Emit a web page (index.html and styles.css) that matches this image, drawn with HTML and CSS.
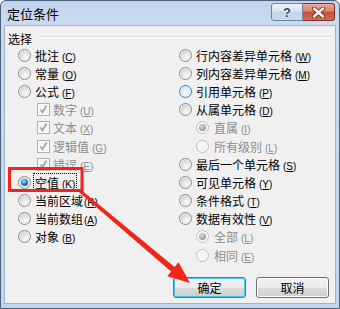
FILE: index.html
```html
<!DOCTYPE html>
<html lang="zh-CN">
<head>
    <meta charset="UTF-8">
    <title>定位条件</title>
    <link rel="stylesheet" href="styles.css">
</head>
<body>
<div class="window">
    <div class="titlebar">
        <span class="title">定位条件</span>
        <span class="cap-btn help">?</span>
        <span class="cap-btn close">
            <svg width="13" height="11" viewBox="0 0 13 11">
                <path d="M2 1.5 L11 9.5 M11 1.5 L2 9.5" stroke="#6a2418" stroke-width="4.2" stroke-linecap="round"/>
                <path d="M2 1.5 L11 9.5 M11 1.5 L2 9.5" stroke="#fff" stroke-width="2.4" stroke-linecap="round"/>
            </svg>
        </span>
    </div>
    <div class="client">
        <div class="group-head"><span>选择</span><i class="rule"></i></div>
        <div class="options">
            <div class="col">
                <div class="row"><span class="radio"></span><span class="label">批注<span class="key">(<u>C</u>)</span></span></div>
                <div class="row"><span class="radio"></span><span class="label">常量<span class="key">(<u>O</u>)</span></span></div>
                <div class="row"><span class="radio"></span><span class="label">公式<span class="key">(<u>F</u>)</span></span></div>
                <div class="row sub-check disabled"><span class="check"></span><span class="label">数字<span class="key">(<u>U</u>)</span></span></div>
                <div class="row sub-check disabled"><span class="check"></span><span class="label">文本<span class="key">(<u>X</u>)</span></span></div>
                <div class="row sub-check disabled"><span class="check"></span><span class="label">逻辑值<span class="key">(<u>G</u>)</span></span></div>
                <div class="row sub-check disabled"><span class="check"></span><span class="label">错误<span class="key">(<u>E</u>)</span></span></div>
                <div class="row"><span class="radio checked"></span><span class="label focus">空值<span class="key">(<u>K</u>)</span></span></div>
                <div class="row"><span class="radio"></span><span class="label">当前区域<span class="key tight">(<u>R</u>)</span></span></div>
                <div class="row"><span class="radio"></span><span class="label">当前数组<span class="key tight">(<u>A</u>)</span></span></div>
                <div class="row"><span class="radio"></span><span class="label">对象<span class="key">(<u>B</u>)</span></span></div>
            </div>
            <div class="col">
                <div class="row"><span class="radio"></span><span class="label">行内容差异单元格<span class="key">(<u>W</u>)</span></span></div>
                <div class="row"><span class="radio"></span><span class="label">列内容差异单元格<span class="key">(<u>M</u>)</span></span></div>
                <div class="row"><span class="radio hover"></span><span class="label">引用单元格<span class="key">(<u>P</u>)</span></span></div>
                <div class="row"><span class="radio"></span><span class="label">从属单元格<span class="key">(<u>D</u>)</span></span></div>
                <div class="row sub disabled"><span class="radio checked"></span><span class="label">直属<span class="key">(<u>I</u>)</span></span></div>
                <div class="row sub disabled"><span class="radio"></span><span class="label">所有级别<span class="key">(<u>L</u>)</span></span></div>
                <div class="row"><span class="radio"></span><span class="label">最后一个单元格<span class="key">(<u>S</u>)</span></span></div>
                <div class="row"><span class="radio"></span><span class="label">可见单元格<span class="key">(<u>Y</u>)</span></span></div>
                <div class="row"><span class="radio"></span><span class="label">条件格式<span class="key">(<u>T</u>)</span></span></div>
                <div class="row"><span class="radio"></span><span class="label">数据有效性<span class="key">(<u>V</u>)</span></span></div>
                <div class="row sub disabled"><span class="radio checked"></span><span class="label">全部<span class="key">(<u>L</u>)</span></span></div>
                <div class="row sub disabled"><span class="radio"></span><span class="label">相同<span class="key">(<u>E</u>)</span></span></div>
            </div>
        </div>
        <div class="footer">
            <button class="btn default">确定</button>
            <button class="btn">取消</button>
        </div>
    </div>
    <!-- annotation drawn over the dialog -->
    <svg class="annot" width="340" height="309" viewBox="0 0 340 309">
        <rect x="9.5" y="168.5" width="72.5" height="22" fill="none" stroke="#f3231b" stroke-width="3"/>
        <polygon fill="#f0261c" points="80.9,189.8 174.6,267 178.5,262.2 190,283 167.3,276.2 171.1,271.4 79.1,192.2"/>
    </svg>
</div>
</body>
</html>
```

FILE: styles.css
```css
body {
    margin: 0;
    font-family: "Noto Sans CJK SC", sans-serif;
    font-size: 12px;
    color: #000;
}
.window {
    position: relative;
    width: 340px;
    height: 309px;
    box-sizing: border-box;
    border: 1px solid #4d6079;
    border-radius: 6px 6px 0 0;
    background: linear-gradient(#c1d4ec, #ccdbef 24px, #c3d6ed);
    display: flex;
    flex-direction: column;
}
.titlebar {
    height: 24px;
    display: flex;
    align-items: flex-start;
    padding: 0 4px 0 6px;
}
.title {
    font-size: 13px;
    line-height: 25px;
    margin-right: auto;
}
.cap-btn {
    margin-top: 2px;
    width: 32px;
    height: 18px;
    box-sizing: border-box;
    border: 1px solid #6c85a6;
    display: flex;
    align-items: center;
    justify-content: center;
}
.help {
    border-radius: 3px 0 0 3px;
    background: linear-gradient(#eef3fa, #d8e4f2 45%, #c4d5ea 50%, #ccdbee);
    font: bold 13px "Liberation Sans", sans-serif;
    color: #34465f;
    text-shadow: 0 0 2px #fff, 0 0 1px #fff;
}
.close {
    border-color: #7e3326;
    border-left: none;
    border-radius: 0 3px 3px 0;
    background: linear-gradient(#eaa99b, #d8826f 45%, #c4503c 50%, #d06a53);
}
.client {
    height: 279px;
    box-sizing: border-box;
    margin: 0 3px 4px;
    border: 1px solid #9fb3ca;
    background-color: #f0f0f0;
    display: flex;
    flex-direction: column;
}
.group-head {
    display: flex;
    align-items: center;
    gap: 6px;
    height: 16px;
    padding: 4px 3px 0;
}
.rule {
    flex: 1;
    margin-top: -3px;
    border-top: 1px solid #d5dfe5;
    border-bottom: 1px solid #fff;
}
.options {
    display: grid;
    grid-template-columns: 161px 1fr;
    padding-left: 13px;
}
.row {
    display: flex;
    align-items: center;
    gap: 4px;
    height: 18.2px;
    white-space: nowrap;
}
.row.sub {
    padding-left: 17px;
    gap: 5px;
}
.row.sub-check {
    padding-left: 19px;
    gap: 3px;
}
.disabled {
    color: #8d8d8d;
}
.key {
    font-family: "Liberation Sans", sans-serif;
    font-size: 10px;
    margin-left: 3px;
}
.key.tight {
    margin-left: 1px;
}
.key u {
    text-underline-offset: 1px;
}
.label.focus {
    outline: 1px dotted #000;
    padding: 0 1px;
    margin-left: -1px;
}
.radio {
    position: relative;
    flex: none;
    width: 13px;
    height: 13px;
    box-sizing: border-box;
    border-radius: 50%;
    border: 1px solid #8c8d8d;
    background: radial-gradient(circle at 60% 65%, #fbfbfb 0, #e3e3e3 40%, #c8c8c8 78%);
    box-shadow: inset 0 0 0 1px #f4f4f4;
}
.radio.hover {
    border-color: #3c7fb1;
    background: radial-gradient(circle at 55% 60%, #ffffff 0, #e1f2fd 40%, #aed9f6 80%);
}
.radio.checked::after {
    content: "";
    position: absolute;
    left: 2px;
    top: 2px;
    width: 7px;
    height: 7px;
    border-radius: 50%;
    background: radial-gradient(circle at 40% 35%, #9bdcff 0, #2b86c8 45%, #0d4a86 90%);
}
.disabled .radio {
    border-color: #c0c0c0;
    background: #f4f4f4;
    box-shadow: inset 0 0 0 1px #fafafa;
}
.disabled .radio.checked::after {
    background: radial-gradient(circle at 40% 35%, #d8d8d8 0, #a8a8a8 55%, #8a8a8a 90%);
}
.check {
    flex: none;
    width: 13px;
    height: 13px;
    box-sizing: border-box;
    border: 1px solid #b1b1b1;
    background: #f4f4f4 url("data:image/svg+xml,%3Csvg xmlns='http://www.w3.org/2000/svg' width='11' height='11'%3E%3Cpath d='M2.5 5.5 L4.5 8.5 L8.5 1.5' fill='none' stroke='%23a3a3a3' stroke-width='1.6'/%3E%3C/svg%3E") no-repeat center;
    box-shadow: inset 0 0 0 1px #fcfcfc;
}
.footer {
    margin-top: auto;
    display: flex;
    justify-content: flex-end;
    gap: 10px;
    padding: 0 6px 5px;
}
.btn {
    width: 73px;
    height: 21px;
    box-sizing: border-box;
    border: 1px solid #707070;
    border-radius: 3px;
    background: linear-gradient(#f2f2f2, #ebebeb 50%, #dddddd 50%, #cfcfcf);
    box-shadow: inset 0 0 0 1px #fbfbfb;
    font-family: "Noto Sans CJK SC", sans-serif;
    font-size: 12px;
    color: #000;
    padding: 0;
}
.btn.default {
    border-color: #3c7fb1;
    box-shadow: inset 0 0 0 1px #48c8f0;
}
.annot {
    position: absolute;
    left: -1px;
    top: -1px;
    pointer-events: none;
}
```
